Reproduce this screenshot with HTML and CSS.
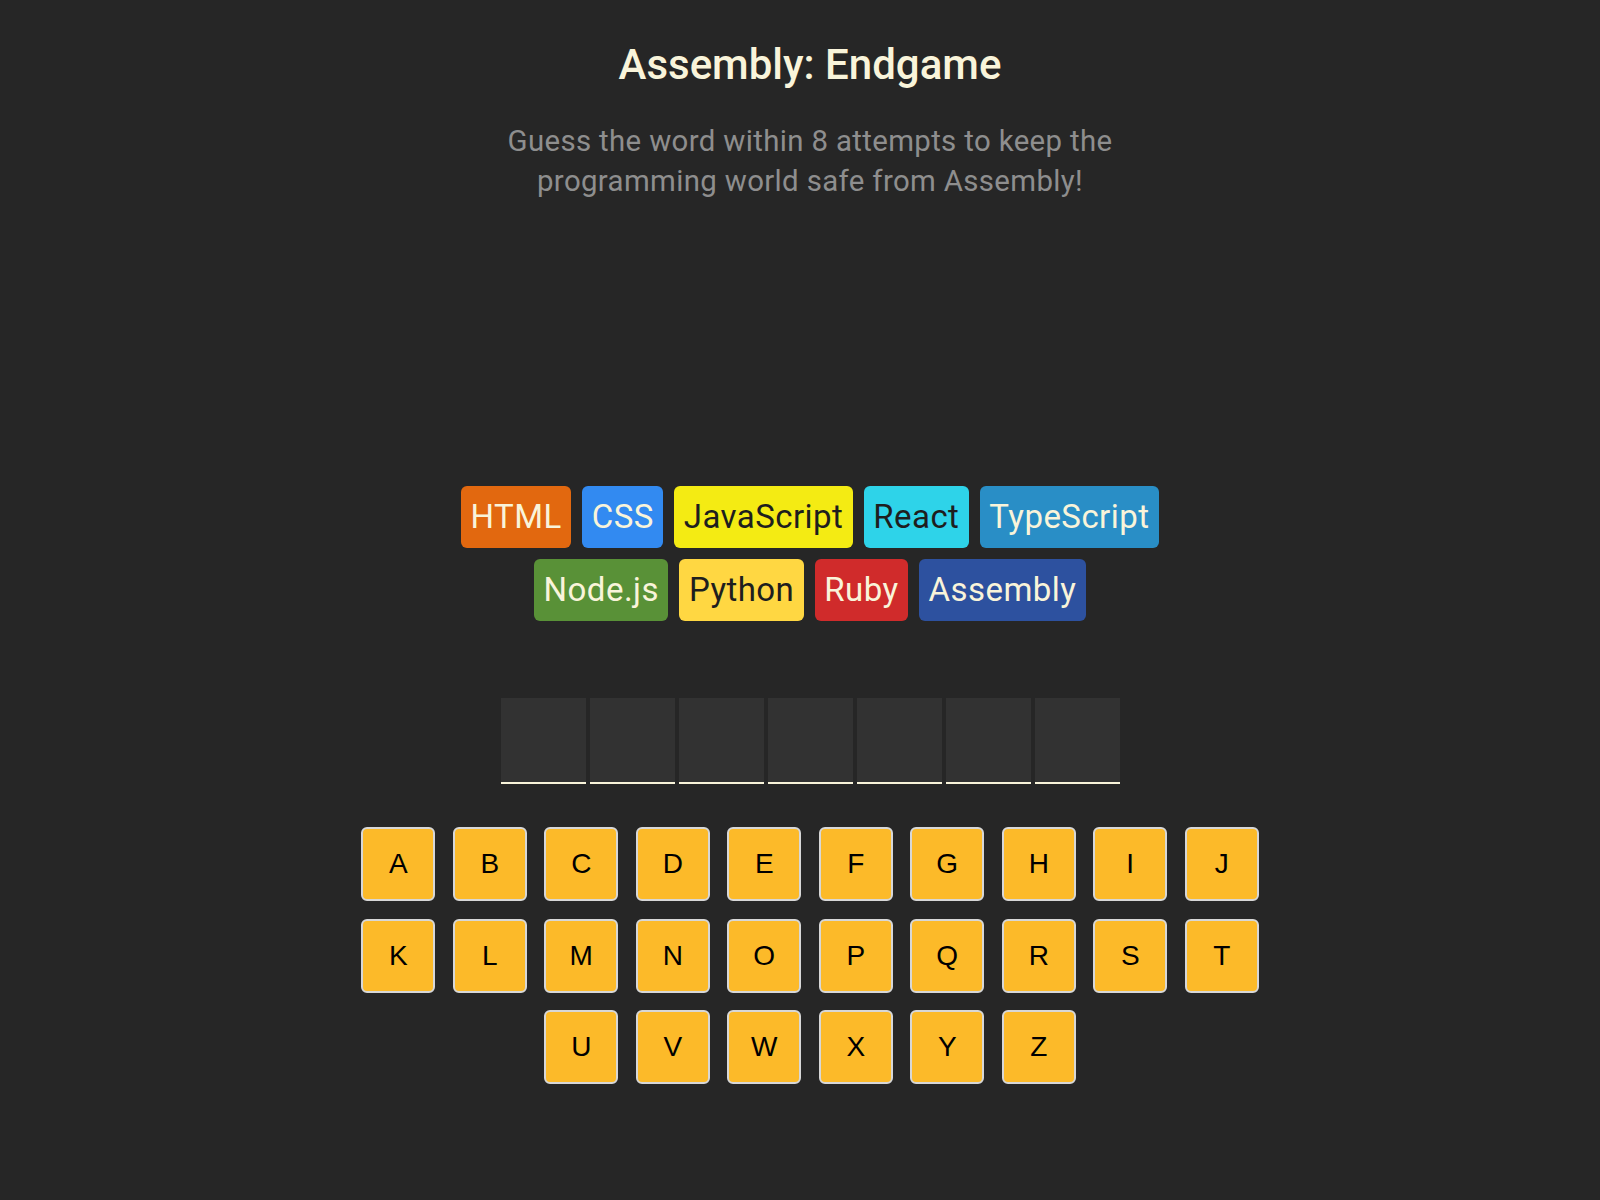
FILE: index.html
```html
<!DOCTYPE html>
<html lang="en">
<head>
<meta charset="utf-8">
<title>Assembly: Endgame</title>
<link rel="stylesheet" href="styles.css">
</head>
<body>
<main class="app">
  <header class="header">
    <h1 class="title">Assembly: Endgame</h1>
    <p class="subtitle">Guess the word within 8 attempts to keep the<br>programming world safe from Assembly!</p>
  </header>
  <section class="game-status"></section>
  <section class="chips">
    <div class="chip-row">
      <span class="chip chip-html">HTML</span>
      <span class="chip chip-css">CSS</span>
      <span class="chip chip-js">JavaScript</span>
      <span class="chip chip-react">React</span>
      <span class="chip chip-ts">TypeScript</span>
    </div>
    <div class="chip-row">
      <span class="chip chip-node">Node.js</span>
      <span class="chip chip-python">Python</span>
      <span class="chip chip-ruby">Ruby</span>
      <span class="chip chip-asm">Assembly</span>
    </div>
  </section>
  <section class="word">
    <span class="letter"></span>
    <span class="letter"></span>
    <span class="letter"></span>
    <span class="letter"></span>
    <span class="letter"></span>
    <span class="letter"></span>
    <span class="letter"></span>
  </section>
  <section class="keyboard">
    <button class="key">A</button>
    <button class="key">B</button>
    <button class="key">C</button>
    <button class="key">D</button>
    <button class="key">E</button>
    <button class="key">F</button>
    <button class="key">G</button>
    <button class="key">H</button>
    <button class="key">I</button>
    <button class="key">J</button>
    <button class="key">K</button>
    <button class="key">L</button>
    <button class="key">M</button>
    <button class="key">N</button>
    <button class="key">O</button>
    <button class="key">P</button>
    <button class="key">Q</button>
    <button class="key">R</button>
    <button class="key">S</button>
    <button class="key">T</button>
    <button class="key">U</button>
    <button class="key">V</button>
    <button class="key">W</button>
    <button class="key">X</button>
    <button class="key">Y</button>
    <button class="key">Z</button>
  </section>
</main>
</body>
</html>
```
FILE: styles.css
```css
html, body {
  margin: 0;
  padding: 0;
  background: #262626;
}

body {
  min-height: 1200px;
  font-family: Roboto, "Liberation Sans", Arial, sans-serif;
  color: #D9D9D9;
}

.app {
  display: flex;
  flex-direction: column;
  align-items: center;
  padding-left: 20px;
}

.header {
  text-align: center;
}

.title {
  margin: 40px 0 0;
  font-size: 42px;
  line-height: 50px;
  font-weight: 500;
  color: #F9F4DA;
}

.subtitle {
  margin: 31px 0 0;
  font-size: 29.4px;
  line-height: 40px;
  letter-spacing: 0.35px;
  color: #8E8E8E;
}

.game-status {
  height: 285px;
}

.chips {
  display: flex;
  flex-direction: column;
  align-items: center;
  gap: 11px;
}

.chip-row {
  display: flex;
  justify-content: center;
  gap: 11px;
}

.chip {
  display: block;
  padding: 0 9.5px;
  height: 62px;
  line-height: 62px;
  font-size: 33px;
  letter-spacing: 0.45px;
  border-radius: 6px;
  color: #F9F4DA;
}

.chip-html { background: #E2680F; }
.chip-css { background: #328AF1; }
.chip-js { background: #F4EB13; color: #1E1E1E; }
.chip-react { background: #2ED3E9; color: #1E1E1E; }
.chip-ts { background: #298EC6; }
.chip-node { background: #599137; }
.chip-python { background: #FFD742; color: #1E1E1E; }
.chip-ruby { background: #D02B2B; }
.chip-asm { background: #2D519F; }

.word {
  display: flex;
  gap: 4px;
  margin-top: 77px;
}

.letter {
  display: block;
  width: 85px;
  height: 84px;
  background: #323232;
  border-bottom: 2px solid #F9F4DA;
}

.keyboard {
  display: flex;
  flex-wrap: wrap;
  justify-content: center;
  gap: 17.5px;
  width: 900px;
  margin-top: 43px;
}

.key {
  box-sizing: border-box;
  width: 74px;
  height: 74px;
  padding: 0;
  background: #FCBA29;
  border: 2px solid #D7D7D7;
  border-radius: 6px;
  font-family: "Liberation Sans", Arial, sans-serif;
  font-size: 28px;
  color: #000;
  cursor: pointer;
}
```
